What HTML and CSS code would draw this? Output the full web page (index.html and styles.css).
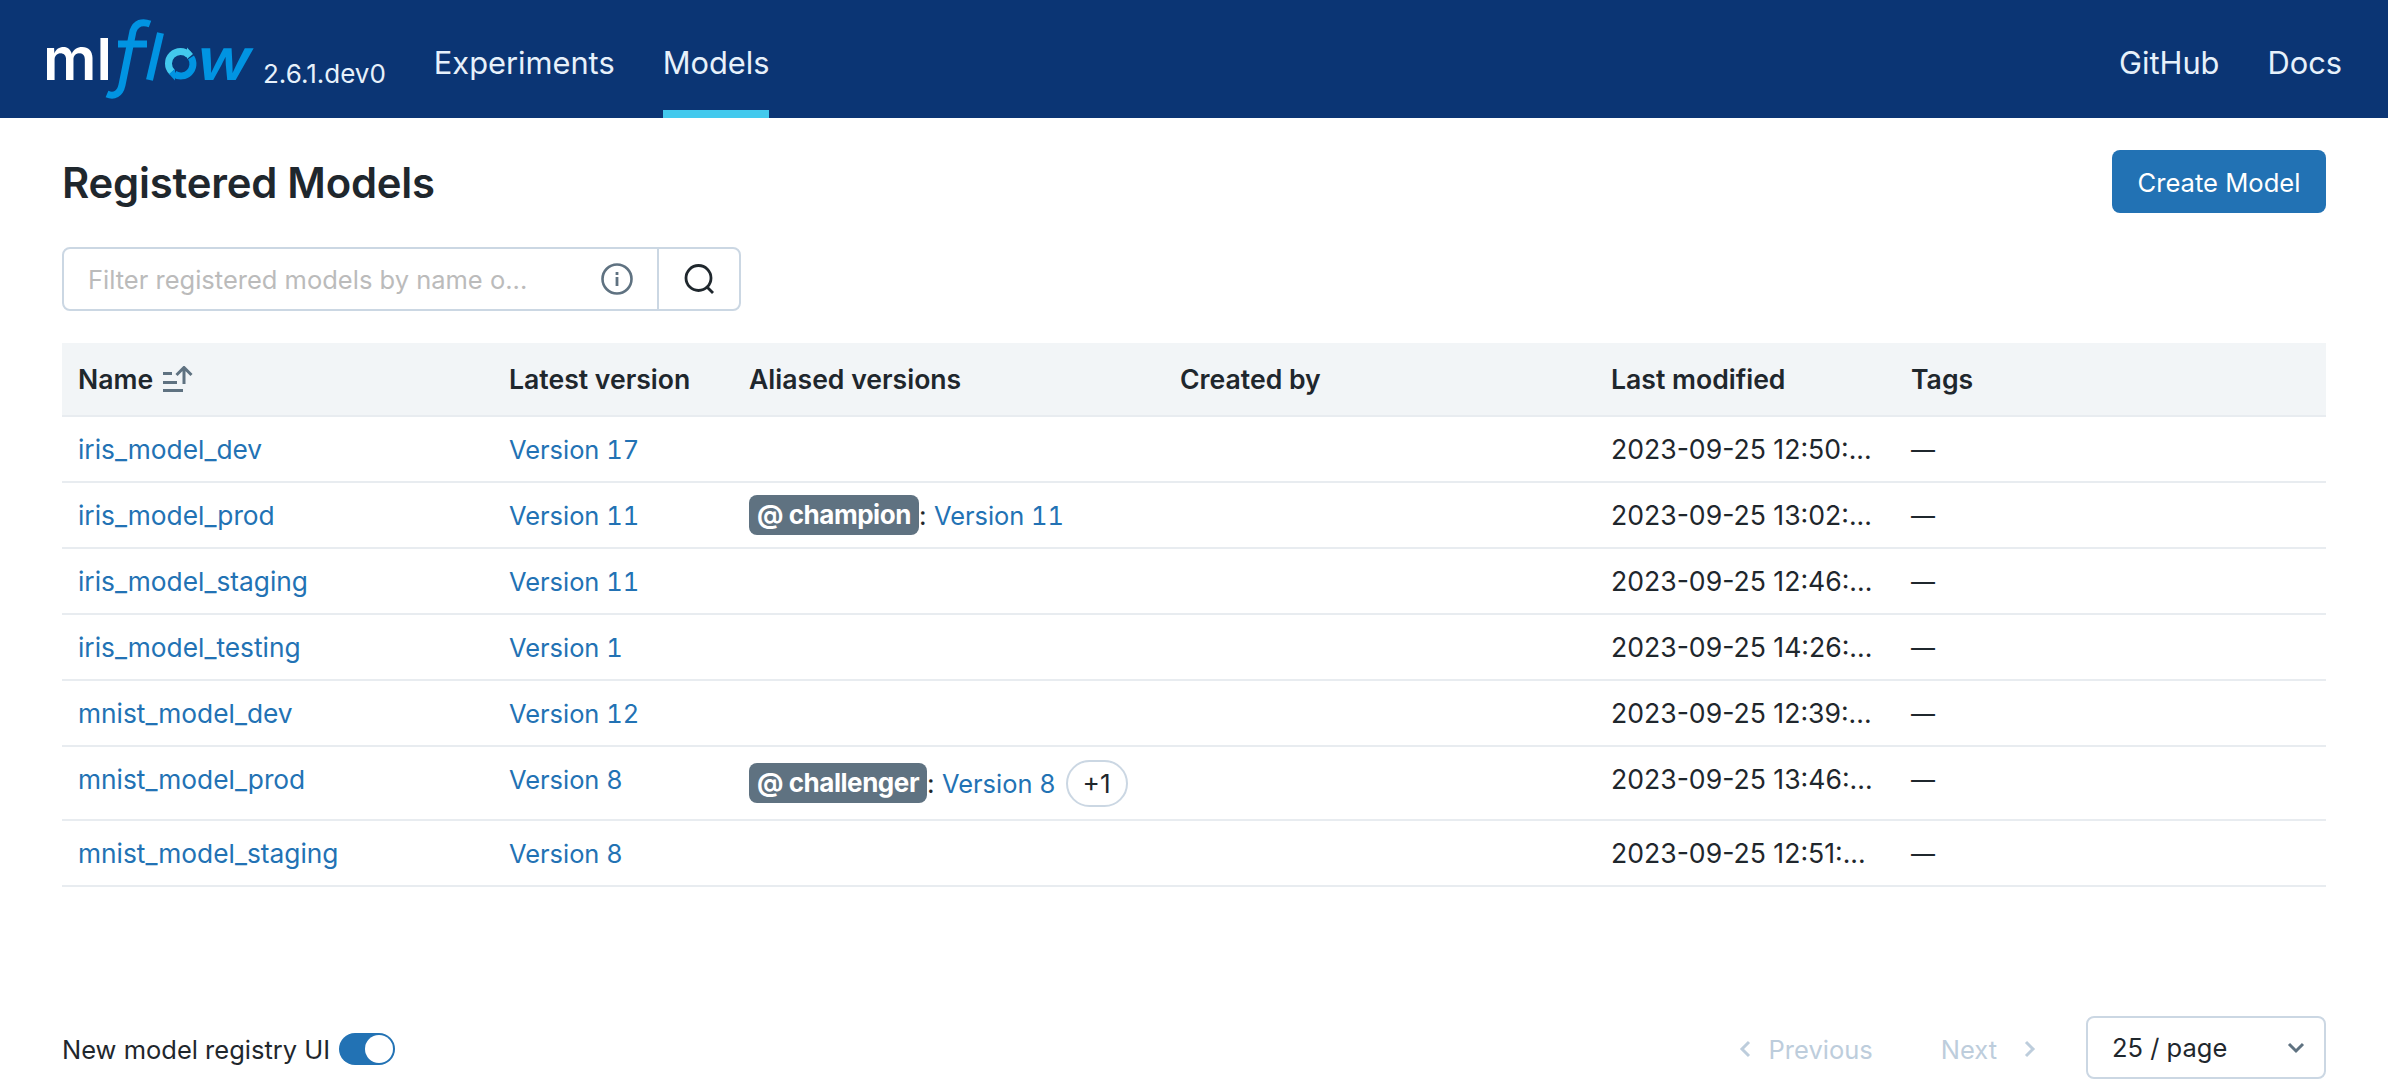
FILE: index.html
```html
<!DOCTYPE html>
<html lang="en">
<head>
<meta charset="utf-8">
<title>MLflow</title>
<link rel="stylesheet" href="styles.css">
</head>
<body>
<header class="topbar">
  <div class="topbar-left">
    <svg class="logo" viewBox="0 0 214 76" width="214" height="76" aria-label="mlflow">
      <text class="logo-ml" x="-3" y="57" textLength="69" lengthAdjust="spacingAndGlyphs">ml</text>
      <path class="logo-stroke" d="M104 1 C96 -2 90 0 87 8 L76 62 C74 71 68 74 61 71"/>
      <path class="logo-stroke" d="M72 21 H101"/>
      <path class="logo-stroke" d="M114.500 10 L103.500 57"/>
      <path class="logo-light" d="M126 49 A12 12 0 0 1 143 32"/>
      <path class="logo-light-fill" d="M141 24.500 L141 36 L147 31 Z"/>
      <path class="logo-stroke" d="M145 34.400 A12 12 0 0 1 128.400 51"/>
      <path class="logo-blue-fill" d="M129 57.500 L129 46 L123 51 Z"/>
      <text class="logo-w" x="160" y="57" textLength="55" lengthAdjust="spacingAndGlyphs" transform="skewX(-13)">w</text>
    </svg>
    <span class="version">2.6.1.dev0</span>
    <nav class="nav">
      <a class="nav-item">Experiments</a>
      <a class="nav-item active">Models</a>
    </nav>
  </div>
  <nav class="nav nav-right">
    <a class="nav-item">GitHub</a>
    <a class="nav-item">Docs</a>
  </nav>
</header>
<main class="page">
  <div class="title-row">
    <h1 class="title">Registered Models</h1>
    <button class="primary">Create Model</button>
  </div>
  <div class="search">
    <div class="search-input">
      <span class="placeholder">Filter registered models by name o...</span>
      <svg class="info" width="32" height="32" viewBox="0 0 32 32"><circle cx="16" cy="16" r="14.5"/><rect x="14.6" y="14" width="2.8" height="9" class="fill"/><rect x="14.6" y="9" width="2.8" height="3" class="fill"/></svg>
    </div>
    <button class="search-btn">
      <svg width="32" height="32" viewBox="0 0 32 32"><circle cx="15.5" cy="15" r="12.5"/><path d="M24 24 L30 30"/></svg>
    </button>
  </div>
  <table class="models">
    <thead>
      <tr>
        <th class="c-name"><span class="name-head">Name
          <svg class="sort" width="30" height="26" viewBox="0 0 30 26"><rect x="0" y="6" width="9" height="3"/><rect x="0" y="15" width="14" height="3"/><rect x="0" y="23" width="20" height="3"/><path class="arrow" d="M21 18 V1.500 M13.500 9 L21 1.500 L28.500 9"/></svg></span></th>
        <th class="c-ver">Latest version</th>
        <th class="c-alias">Aliased versions</th>
        <th class="c-by">Created by</th>
        <th class="c-mod">Last modified</th>
        <th class="c-tags">Tags</th>
      </tr>
    </thead>
    <tbody>
      <tr><td><a>iris_model_dev</a></td><td><a class="ver">Version 17</a></td><td></td><td></td><td class="date">2023-09-25 12:50:...</td><td class="dash">—</td></tr>
      <tr><td><a>iris_model_prod</a></td><td><a class="ver">Version 11</a></td><td><span class="alias"><span class="pill">@ champion</span>: <a class="ver">Version 11</a></span></td><td></td><td class="date">2023-09-25 13:02:...</td><td class="dash">—</td></tr>
      <tr><td><a>iris_model_staging</a></td><td><a class="ver">Version 11</a></td><td></td><td></td><td class="date">2023-09-25 12:46:...</td><td class="dash">—</td></tr>
      <tr><td><a>iris_model_testing</a></td><td><a class="ver">Version 1</a></td><td></td><td></td><td class="date">2023-09-25 14:26:...</td><td class="dash">—</td></tr>
      <tr><td><a>mnist_model_dev</a></td><td><a class="ver">Version 12</a></td><td></td><td></td><td class="date">2023-09-25 12:39:...</td><td class="dash">—</td></tr>
      <tr class="tall"><td><a>mnist_model_prod</a></td><td><a class="ver">Version 8</a></td><td class="alias-cell"><span class="alias"><span class="pill">@ challenger</span>: <a class="ver">Version 8</a><span class="more">+1</span></span></td><td></td><td class="date">2023-09-25 13:46:...</td><td class="dash">—</td></tr>
      <tr><td><a>mnist_model_staging</a></td><td><a class="ver">Version 8</a></td><td></td><td></td><td class="date">2023-09-25 12:51:...</td><td class="dash">—</td></tr>
    </tbody>
  </table>
  <footer class="footer">
    <div class="toggle-wrap">
      <span>New model registry UI</span>
      <span class="toggle"><span class="knob"></span></span>
    </div>
    <div class="pager">
      <span class="pager-btn"><svg width="12" height="20" viewBox="0 0 12 20"><path d="M10 3 L3 10 L10 17"/></svg>Previous</span>
      <span class="pager-btn next">Next<svg width="12" height="20" viewBox="0 0 12 20"><path d="M2 3 L9 10 L2 17"/></svg></span>
      <div class="select">
        <span>25 / page</span>
        <svg width="18" height="12" viewBox="0 0 18 12"><path d="M2 2 L9 9 L16 2"/></svg>
      </div>
    </div>
  </footer>
</main>
</body>
</html>
```
FILE: styles.css
```css
* { box-sizing: border-box; }
html, body { margin: 0; height: 100%; }
body {
  font-family: Inter, "Liberation Sans", sans-serif;
  font-size: 26px;
  color: #1f272d;
  background: #fff;
  overflow: hidden;
}
a { color: #2272b4; text-decoration: none; }

.topbar {
  height: 118px;
  background: #0b3574;
  display: flex;
  justify-content: space-between;
  align-items: stretch;
  padding: 0 46px;
  color: #e7f1fb;
}
.topbar-left { display: flex; align-items: stretch; }
.logo { margin-top: 23px; overflow: visible; flex: none; }
.logo-ml { font: 600 58px Inter, sans-serif; fill: #fff; }
.logo-w { font: 600 58px Inter, sans-serif; fill: #0194e2; }
.logo-stroke { fill: none; stroke: #0194e2; stroke-width: 7; }
.logo-light { fill: none; stroke: #43c9ed; stroke-width: 7; }
.logo-light-fill { fill: #43c9ed; }
.logo-blue-fill { fill: #0194e2; }
.version { font-size: 26px; margin: 58px 48px 0 3px; line-height: 32px; }
.nav { display: flex; gap: 48px; align-items: stretch; }
.nav-item {
  font-size: 30.8px;
  color: #e7f1fb;
  display: flex;
  align-items: center;
  padding-top: 14px;
  border-bottom: 8px solid transparent;
}
.nav-item.active { border-bottom-color: #43c9ed; }

.page {
  height: calc(100% - 118px);
  padding: 0 62px 8px;
  display: flex;
  flex-direction: column;
}
.title-row {
  display: flex;
  justify-content: space-between;
  align-items: flex-start;
  padding-top: 32px;
}
.title { margin: 0; padding-top: 3px; font-size: 41.8px; line-height: 61px; font-weight: 600; letter-spacing: -0.2px; }
.primary {
  width: 214px;
  height: 63px;
  padding: 2px 0 0;
  background: #2272b4;
  color: #fff;
  border: 0;
  border-radius: 8px;
  font: 400 25.6px Inter, sans-serif;
}
.search {
  display: flex;
  width: 679px;
  height: 64px;
  margin-top: 33px;
  border: 2px solid #cbd7e3;
  border-radius: 8px;
}
.search-input {
  flex: 1;
  display: flex;
  align-items: center;
  justify-content: space-between;
  padding: 0 24px;
  border-right: 2px solid #cbd7e3;
}
.placeholder { color: #bbb; font-size: 25.5px; }
.info circle { fill: none; stroke: #5f7281; stroke-width: 2.6; }
.info .fill { fill: #5f7281; }
.search-btn {
  width: 80px;
  background: none;
  border: 0;
  padding: 0;
  display: flex;
  align-items: center;
  justify-content: center;
}
.search-btn svg { fill: none; stroke: #1f272d; stroke-width: 2.8; }

.models {
  width: 100%;
  table-layout: fixed;
  border-collapse: collapse;
  margin-top: 32px;
  font-size: 26.3px;
}
.models th, .models td {
  padding: 0 16px;
  text-align: left;
  white-space: nowrap;
}
.models th {
  height: 73px;
  font-size: 26.6px;
  font-weight: 600;
  background: #f2f5f7;
  border-bottom: 2px solid #e8ecf0;
}
.models td { height: 66px; border-bottom: 2px solid #e8ecf0; }
.models tr.tall td { height: 74px; padding-bottom: 8px; }
.models tr.tall td.alias-cell { padding-bottom: 0; }
.models td.dash { font-size: 24px; }
.models td.date { font-size: 26.6px; }
.ver { font-size: 25.4px; font-variant-numeric: tabular-nums; }
.c-name { width: 431px; }
.c-ver { width: 240px; }
.c-alias { width: 431px; }
.c-by { width: 431px; }
.c-mod { width: 300px; }
.name-head { display: inline-flex; align-items: center; gap: 10px; }
.sort { fill: #5f7281; }
.sort .arrow { fill: none; stroke: #5f7281; stroke-width: 3; }
.alias { display: inline-flex; align-items: center; white-space: pre; }
.pill {
  background: #5f7281;
  color: #fff;
  font-size: 26px;
  font-weight: 700;
  letter-spacing: -0.45px;
  height: 40px;
  line-height: 40px;
  padding: 0 8px;
  border-radius: 8px;
}
.more {
  height: 47px;
  width: 62px;
  margin-left: 10px;
  border: 2px solid #cbd7e3;
  border-radius: 24px;
  display: flex;
  align-items: center;
  justify-content: center;
}

.footer {
  margin-top: auto;
  display: flex;
  justify-content: space-between;
  align-items: center;
  font-size: 25.5px;
}
.toggle-wrap { display: flex; align-items: center; gap: 9px; padding-top: 3px; }
.toggle {
  width: 56px;
  height: 32px;
  background: #2272b4;
  border-radius: 16px;
  display: flex;
  justify-content: flex-end;
  align-items: center;
  padding-right: 2px;
}
.knob { width: 28px; height: 28px; background: #fff; border-radius: 50%; }
.pager { display: flex; align-items: center; }
.pager-btn { color: #bdcddc; display: flex; align-items: center; gap: 18px; padding-top: 3px; }
.pager-btn svg { fill: none; stroke: #bdcddc; stroke-width: 3; }
.pager-btn.next { margin-left: 68px; gap: 27px; }
.select {
  width: 240px;
  height: 63px;
  margin-left: 50px;
  border: 2px solid #cbd7e3;
  border-radius: 8px;
  display: flex;
  align-items: center;
  justify-content: space-between;
  padding: 0 19px 0 24px;
}
.select svg { fill: none; stroke: #5f7281; stroke-width: 3; }
```
